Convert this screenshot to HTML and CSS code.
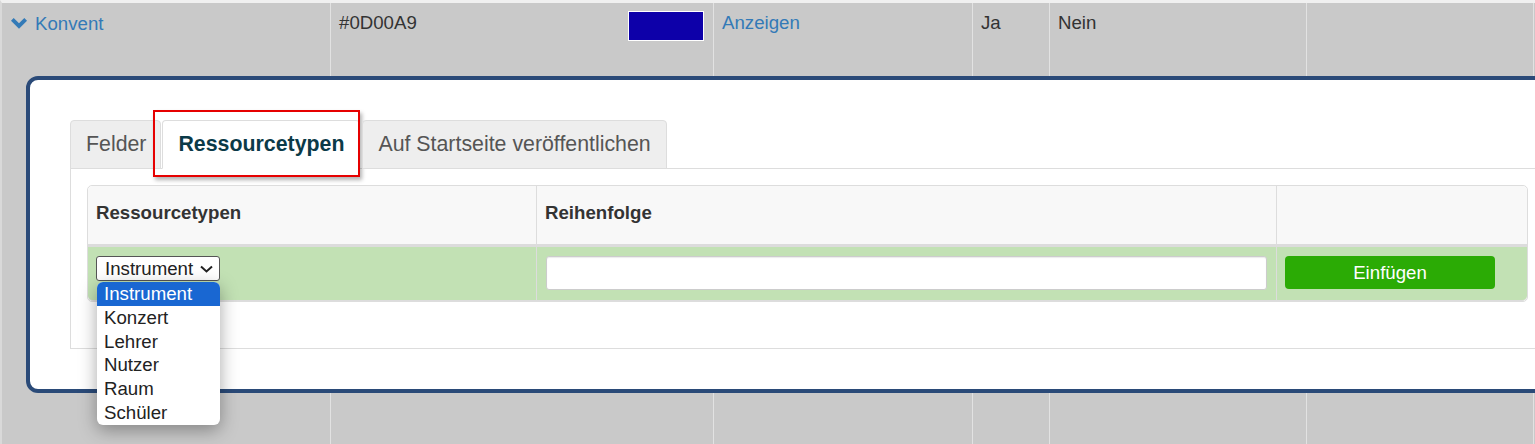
FILE: index.html
```html
<!DOCTYPE html>
<html lang="de">
<head>
<meta charset="utf-8">
<title>Konvent</title>
<link rel="stylesheet" href="styles.css">
</head>
<body>
<div class="grid">
  <div class="cell c1">
    <a class="link toggle" href="#">
      <svg class="chev" width="16" height="11" viewBox="0 0 16 11"><polygon points="0,2.7 2.7,0 8,5.3 13.3,0 16,2.7 8,10.7" fill="#337ab7"/></svg>Konvent</a>
  </div>
  <div class="cell c2"><span>#0D00A9</span><span class="swatch"></span></div>
  <div class="cell c3"><a class="link" href="#">Anzeigen</a></div>
  <div class="cell c4">Ja</div>
  <div class="cell c5">Nein</div>
  <div class="cell c6"></div>
  <div class="cell c7"></div>

  <div class="panel">
    <ul class="tabs">
      <li class="tab"><a href="#">Felder</a></li>
      <li class="tab active"><a href="#">Ressourcetypen</a><span class="highlight"></span></li>
      <li class="tab"><a href="#">Auf Startseite veröffentlichen</a></li>
    </ul>
    <div class="tab-content">
      <div class="table">
        <div class="th">Ressourcetypen</div>
        <div class="th">Reihenfolge</div>
        <div class="th last"></div>
        <div class="td">
          <div class="select">
            <span>Instrument</span>
            <svg width="13" height="8" viewBox="0 0 13 8"><polyline points="1,1.5 6.5,6.5 12,1.5" fill="none" stroke="#222" stroke-width="2"/></svg>
            <ul class="options">
              <li class="selected">Instrument</li>
              <li>Konzert</li>
              <li>Lehrer</li>
              <li>Nutzer</li>
              <li>Raum</li>
              <li>Schüler</li>
            </ul>
          </div>
        </div>
        <div class="td"><div class="input"></div></div>
        <div class="td last"><button class="btn">Einfügen</button></div>
      </div>
    </div>
  </div>
</div>
</body>
</html>
```
FILE: styles.css
```css
* { box-sizing: border-box; }
html, body { margin: 0; padding: 0; }
body {
  width: 1535px;
  height: 444px;
  overflow: hidden;
  font-family: "Liberation Sans", Arial, sans-serif;
  font-size: 18.67px;
  line-height: 26.67px;
  color: #333;
  background: #c9c9c9;
}
.grid {
  width: 1600px;
  min-height: 444px;
  display: grid;
  grid-template-columns: 329px 383px 259px 77px 257px 227px 1fr;
  grid-template-rows: 73px auto 1fr;
  background: #c9c9c9;
  border-top: 3px solid #f0f0f0;
  border-left: 2px solid #d9d9d9;
}
.cell {
  grid-row: 1 / -1;
  padding: 7px 8px;
  border-right: 1px solid #e2e2e2;
}
.c7 { border-right: 0; }
.c1 { grid-column: 1; }
.c2 { grid-column: 2; display: flex; justify-content: space-between; align-items: flex-start; padding-right: 9px; }
.c3 { grid-column: 3; }
.c4 { grid-column: 4; }
.c5 { grid-column: 5; }
.c6 { grid-column: 6; }
.c7 { grid-column: 7; }
.link { color: #337ab7; text-decoration: none; }
.toggle { display: inline-flex; align-items: center; }
.chev { margin-left: 1px; margin-right: 8px; margin-top: -2px; }
.swatch {
  display: block;
  width: 76px;
  height: 30px;
  margin-top: 1px;
  background: #0D00A9;
  border: 1px solid #fff;
}
.panel {
  grid-row: 2;
  grid-column: 1 / -1;
  justify-self: start;
  margin-left: 24px;
  width: 1563px;
  background: #fff;
  border: 4px solid #2a4a78;
  border-radius: 12px;
  padding: 40px;
  position: relative;
  z-index: 1;
}
.tabs {
  list-style: none;
  margin: 0;
  padding: 0;
  display: flex;
  border-bottom: 1px solid #ddd;
  font-size: 21.33px;
}
.tab {
  margin-right: 2px;
  margin-bottom: -1px;
  position: relative;
}
.tab:first-child a { padding-right: 14px; }
.tab:first-child { margin-right: 1px; }
.tab a {
  display: block;
  padding: 8px 15px 9px;
  line-height: 30px;
  border: 1px solid #ddd;
  border-radius: 4px 4px 0 0;
  background: #eee;
  color: #555;
  text-decoration: none;
}
.tab.active a {
  background: #fff;
  border-bottom-color: #fff;
  color: #0b3a48;
  font-weight: bold;
}
.highlight {
  position: absolute;
  left: -9px;
  top: -10px;
  width: 207px;
  height: 67px;
  border: 2px solid #e60000;
  box-shadow: 2px 3px 4px rgba(0,0,0,0.3);
  pointer-events: none;
}
.tab-content {
  border: 1px solid #ddd;
  border-top: 0;
  padding: 16px 16px 46px;
}
.table {
  width: 1441px;
  display: grid;
  grid-template-columns: 449px 740px 1fr;
  border: 1px solid #ddd;
  border-radius: 5px;
}
.th {
  background: #f8f8f8;
  font-weight: bold;
  padding: 14px 8px 17px;
  border-right: 1px solid #ddd;
  border-bottom: 3px solid #dcdcdc;
  height: 61px;
}
.th:first-child { border-top-left-radius: 5px; }
.th.last { border-top-right-radius: 5px; }
.last { border-right: 0 !important; }
.td {
  background: #c2e1b4;
  padding: 9px 9px 9px 8px;
  border-right: 1px solid #dcdcdc;
  border-bottom: 1px solid #dcdcdc;
  height: 54px;
  position: relative;
}
.td:nth-child(5) { padding-left: 9px; }
.td:nth-child(4) { border-bottom-left-radius: 5px; }
.td.last { border-bottom-right-radius: 5px; }
.select {
  position: relative;
  width: 124px;
  height: 25px;
  background: #fff;
  border: 1px solid #555;
  border-radius: 3px;
  display: flex;
  align-items: center;
  justify-content: space-between;
  padding: 0 6px 0 8px;
  line-height: 23px;
  color: #222;
}
.select svg { margin-top: 1px; }
.options {
  position: absolute;
  left: 0;
  top: 25px;
  width: 123px;
  margin: 0;
  padding: 0;
  list-style: none;
  background: #fff;
  border-radius: 6px;
  overflow: hidden;
  box-shadow: 0 5px 18px rgba(0,0,0,0.35);
  z-index: 5;
}
.options li {
  height: 23.8px;
  line-height: 23.8px;
  padding-left: 7px;
  color: #222;
}
.options li.selected {
  background: #1967d2;
  color: #fff;
}
.input {
  width: 721px;
  height: 34px;
  background: #fff;
  border: 1px solid #ccc;
  border-radius: 3px;
  box-shadow: inset 0 1px 1px rgba(0,0,0,0.08);
}
.btn {
  width: 210px;
  height: 33px;
  background: #2bab05;
  color: #fff;
  border: 0;
  border-radius: 4px;
  font-family: inherit;
  font-size: 18.67px;
  line-height: 26px;
  padding: 0;
}
```
